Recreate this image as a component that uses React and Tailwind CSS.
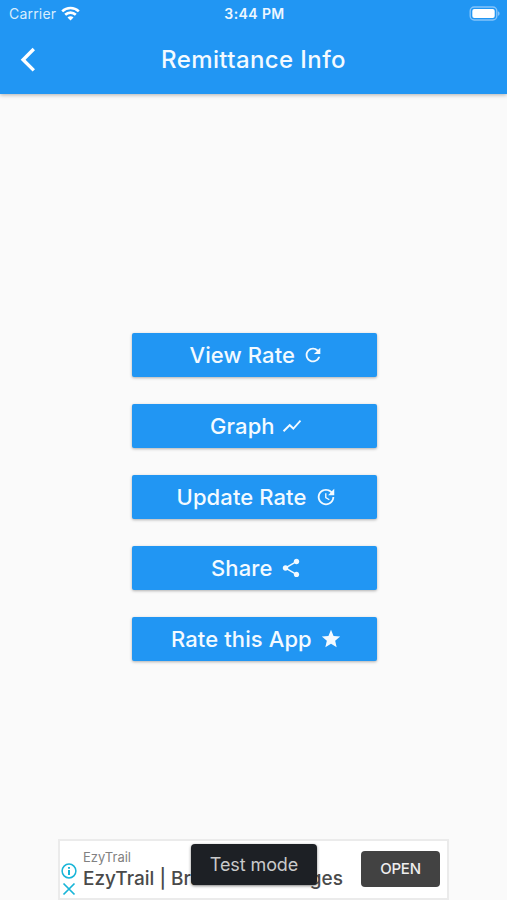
import { MdRefresh, MdShare, MdShowChart, MdStar, MdUpdate } from 'react-icons/md';

const ACTIONS = [
  { label: 'View Rate', icon: MdRefresh, text: 'w-[105px]' },
  { label: 'Graph', icon: MdShowChart, text: 'w-[64px]' },
  { label: 'Update Rate', icon: MdUpdate, text: 'w-[131px]' },
  { label: 'Share', icon: MdShare, text: 'w-[62px]' },
  { label: 'Rate this App', icon: MdStar, text: 'w-[142px]' },
];

function StatusBar() {
  return (
    <div className="grid h-7 grid-cols-3 items-center pl-[9px] pr-[7px] text-[14px] leading-none">
      <div className="flex items-center gap-[5px]">
        <span className="text-[14px] tracking-[0.2px] text-[#d8edfd]">Carrier</span>
        <svg className="-translate-y-px" width="19" height="15" viewBox="0 0 19 15" fill="none" stroke="white" strokeWidth="2.6">
          <path d="M1.2 5.4a12 12 0 0 1 16.6 0" />
          <path d="M4.2 8.8a7.6 7.6 0 0 1 10.6 0" />
          <path d="M9.5 14.6 6.5 11.6a4.2 4.2 0 0 1 6 0z" fill="white" stroke="none" />
        </svg>
      </div>
      <span className="text-center font-semibold tracking-[0.4px] text-[#eef7ff]">3:44 PM</span>
      <svg className="-translate-y-px justify-self-end" width="31" height="15" viewBox="0 0 31 15">
        <rect x="1.2" y="1" width="26.6" height="13" rx="4" fill="none" stroke="#84c4fa" strokeWidth="1.4" />
        <rect x="3.3" y="3" width="22.4" height="9" rx="2" fill="white" />
        <path d="M29 5.2v4.6c1-.4 1.6-1.3 1.6-2.3s-.6-1.9-1.6-2.3z" fill="#84c4fa" />
      </svg>
    </div>
  );
}

function ActionButton({ label, icon: Icon, text }) {
  return (
    <button
      type="button"
      className="flex h-11 w-[245px] items-center justify-center gap-[7px] rounded-[2px] bg-[#2196f3] pl-[5px] text-[22px] font-medium tracking-[0.1px] text-[#f3faff] shadow-[0_1px_3px_rgba(0,0,0,0.3)]"
    >
      <span className={`${text} whitespace-nowrap pt-px text-left`}>{label}</span>
      <Icon size={22} />
    </button>
  );
}

function AdBanner() {
  return (
    <div className="flex h-[61px] w-[391px] border-2 border-[#ebebeb] bg-white">
      <div className="flex w-[23px] shrink-0 flex-col items-center justify-end gap-[3px] pb-[2px] pr-[6px]">
        <svg width="16" height="16" viewBox="0 0 16 16" fill="none" stroke="#18b5d8">
          <circle cx="8" cy="8" r="6.9" strokeWidth="1.5" />
          <path d="M8 7v5M8 4v1.8" strokeWidth="2" />
        </svg>
        <svg width="14" height="14" viewBox="0 0 14 14" stroke="#18b5d8" strokeWidth="1.7">
          <path d="m1.5 1.5 11 11M12.5 1.5l-11 11" />
        </svg>
      </div>
      <div className="w-[260px] shrink-0 pt-[8px]">
        <p className="text-[13px] leading-4 text-[#818181]">EzyTrail</p>
        <p className="flex justify-between whitespace-nowrap text-[19px] font-medium leading-7 text-[#4a4a4a]">
          <span>EzyTrail | Bra</span>
          <span>ges</span>
        </p>
      </div>
      <button
        type="button"
        className="ml-[18px] mt-[10px] h-9 w-[79px] rounded-[4px] bg-[#424242] text-[15px] font-medium tracking-[-0.2px] text-[#eeeeee]"
      >
        OPEN
      </button>
    </div>
  );
}

export default function App() {
  return (
    <div className="flex h-[900px] w-[507px] flex-col overflow-hidden bg-[#fafafa] font-['Inter',sans-serif]">
      <header className="h-[94px] shrink-0 bg-[#2196f3] text-white shadow-[0_1px_4px_rgba(0,0,0,0.3)]">
        <StatusBar />
        <div className="grid h-16 grid-cols-[80px_1fr_80px] items-center">
          <svg className="ml-[19px]" width="18" height="26" viewBox="0 0 18 26" fill="none" stroke="white" strokeWidth="3.4">
            <path d="M14.8 2 4.1 12.7l10.7 10.7" />
          </svg>
          <h1 className="whitespace-nowrap text-center text-[24px] font-medium tracking-[0.4px] text-[#f3faff]">
            Remittance Info
          </h1>
        </div>
      </header>

      <main className="flex flex-1 flex-col items-center gap-[27px] pl-px pt-[239px]">
        {ACTIONS.map((action) => (
          <ActionButton key={action.label} {...action} />
        ))}
      </main>

      <footer className="relative flex justify-center">
        <AdBanner />
        <div className="absolute left-[191px] top-[5px] flex h-[41px] w-[126px] items-center justify-center rounded-[4px] bg-[#1d2025] text-[18px] tracking-[-0.1px] text-[#c9cacb] shadow-[0_1px_3px_rgba(0,0,0,0.5)]">
          Test mode
        </div>
      </footer>
    </div>
  );
}
